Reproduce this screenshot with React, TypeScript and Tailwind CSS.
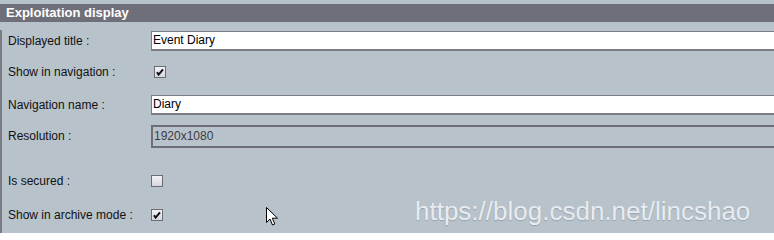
import React from "react";

const font = { fontFamily: '"Liberation Sans", Arial, sans-serif' };

function Check({ checked }: { checked?: boolean }) {
  return (
    <div className="w-[12px] h-[12px] shrink-0 border border-[#6c6c74] bg-gradient-to-b from-[#f2f2f6] to-[#d6d6de] flex items-center justify-center">
      {checked && (
        <svg width="8" height="8" viewBox="0 0 8 8">
          <path d="M1 4.2 L2.6 6.6 L7 1.4" stroke="#111" strokeWidth="2" fill="none" />
        </svg>
      )}
    </div>
  );
}

function Row({ label, top, h, children }: { label: string; top: string; h: string; children: React.ReactNode }) {
  return (
    <div className={`flex items-center ${top} ${h}`}>
      <div className="w-[149px] shrink-0 pl-[6px] text-[12px] text-[#111]">{label}</div>
      {children}
    </div>
  );
}

function Cursor() {
  return (
    <svg width="13" height="20" viewBox="0 0 13 20" className="absolute left-[266px] top-[207px]">
      <path d="M0.5 0.5 L0.5 15.5 L4 12 L6.5 18 L8.8 17 L6.3 11.2 L11.5 11.2 Z" fill="#fff" stroke="#000" strokeWidth="1" />
    </svg>
  );
}

export default function App() {
  return (
    <div className="relative w-[774px] h-[233px] overflow-hidden bg-[#b8c2cb]" style={font}>
      <div className="pt-[4px]">
        <div className="h-[18px] bg-[#6f6f79] pl-[6px] flex items-center text-white font-bold text-[13px]">
          Exploitation display
        </div>
        <div className="border-l-2 border-[#7b7b83] h-[211px]">
          <Row label="Displayed title :" top="mt-[8px]" h="h-[21px]">
            <div className="w-[640px] shrink-0 h-[20px] bg-white border border-[#7c7c84] border-b-2 pl-[1px] flex items-center text-[12px] text-black">
              Event Diary
            </div>
          </Row>
          <Row label="Show in navigation :" top="mt-[14px]" h="h-[14px]">
            <div className="ml-[3px]">
              <Check checked />
            </div>
          </Row>
          <Row label="Navigation name :" top="mt-[15px]" h="h-[21px]">
            <div className="w-[640px] shrink-0 h-[20px] bg-white border border-[#7c7c84] border-b-2 pl-[1px] flex items-center text-[12px] text-black">
              Diary
            </div>
          </Row>
          <Row label="Resolution :" top="mt-[9px]" h="h-[24px]">
            <div className="w-[640px] shrink-0 h-[23px] border-2 border-[#6e6e76] pl-[1px] flex items-center text-[12px] text-[#3c3c44]">
              1920x1080
            </div>
          </Row>
          <Row label="Is secured :" top="mt-[26px]" h="h-[14px]">
            <Check />
          </Row>
          <Row label="Show in archive mode :" top="mt-[20px]" h="h-[14px]">
            <Check checked />
          </Row>
        </div>
      </div>
      <div
        className="absolute left-[415px] top-[192px] text-[26px] text-[#e8ecf0] whitespace-nowrap"
        style={{ fontFamily: '"Liberation Sans", Arial, sans-serif', textShadow: "0 1px 1px rgba(90,100,110,0.35)" }}
      >
        https://blog.csdn.net/lincshao
      </div>
      <Cursor />
    </div>
  );
}
